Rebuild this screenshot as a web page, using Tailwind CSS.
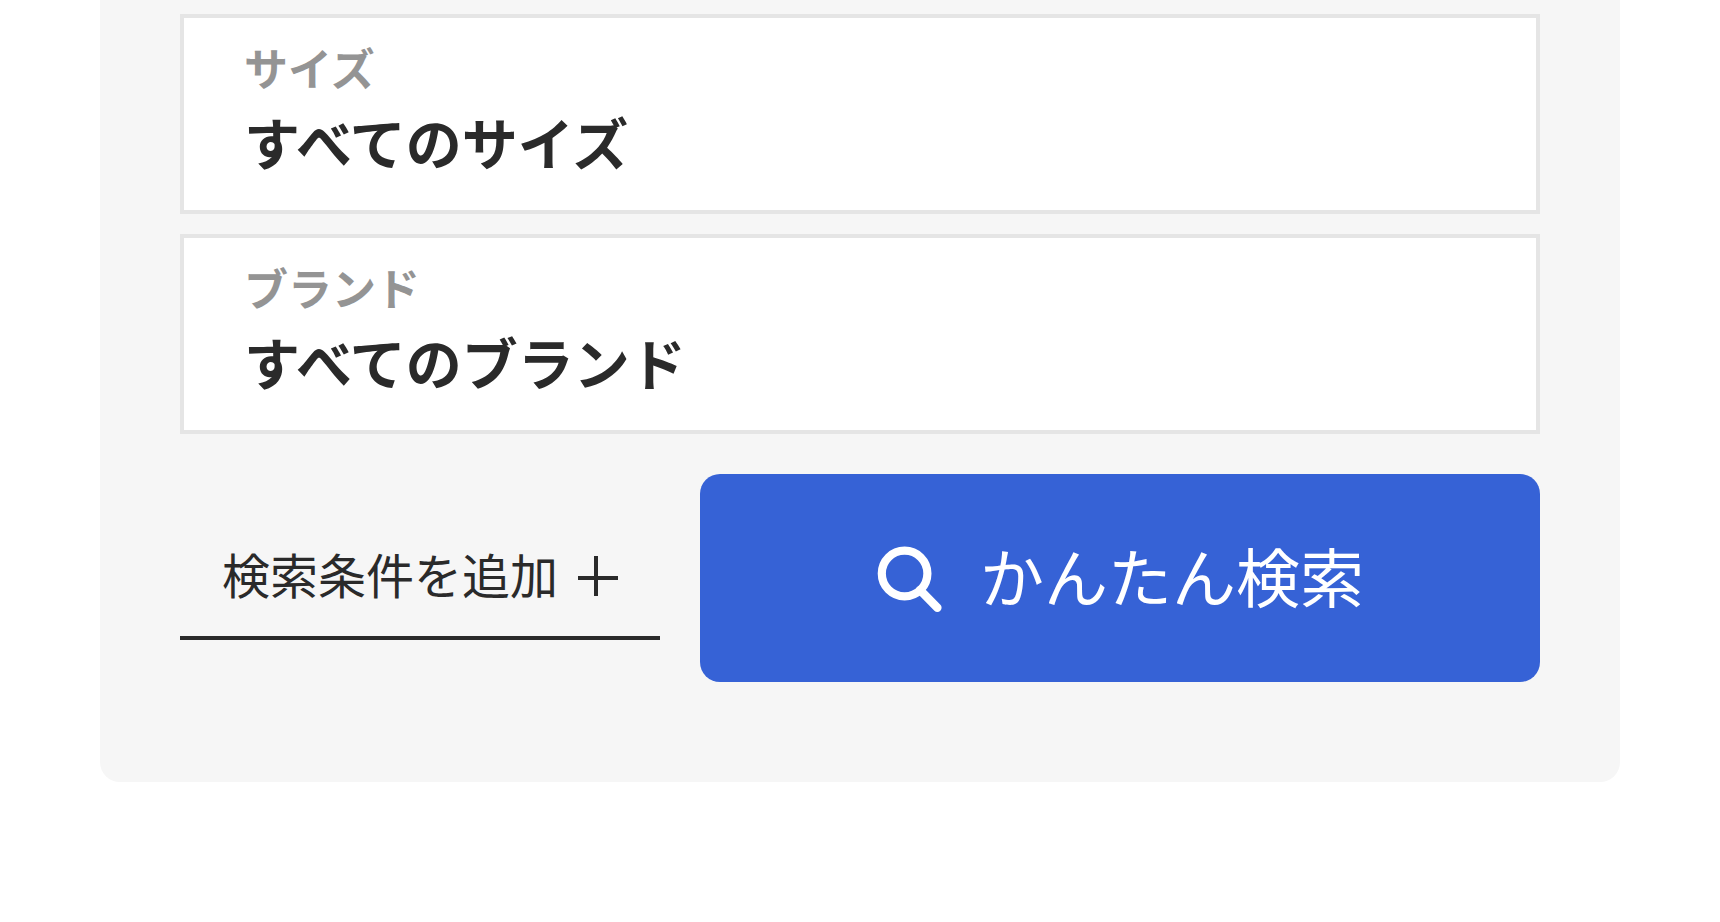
<!DOCTYPE html>
<html lang="ja">
<head>
    <meta charset="UTF-8">
    <meta name="viewport" content="width=device-width, initial-scale=1.0">
    <title>かんたん検索</title>
    <script src="https://cdn.jsdelivr.net/npm/@tailwindcss/browser@4"></script>
</head>
<body class="bg-white font-['Noto_Sans_CJK_JP',sans-serif] text-[#2a2a2a]">
    <main class="mx-[100px]">
        <form class="rounded-b-[20px] bg-[#f6f6f6] px-20 pt-[14px] pb-[100px]">
            <!-- Conditions -->
            <div class="flex flex-col gap-5">
                <div class="flex h-[200px] flex-col border-4 border-[#e5e5e5] bg-white px-[60px] pt-5">
                    <label for="size" class="text-[44px] leading-[58px] font-bold text-[#949494]">サイズ</label>
                    <select id="size" class="w-full appearance-none text-[56px] leading-[90px] font-bold">
                        <option>すべてのサイズ</option>
                    </select>
                </div>
                <div class="flex h-[200px] flex-col border-4 border-[#e5e5e5] bg-white px-[60px] pt-5">
                    <label for="brand" class="text-[44px] leading-[58px] font-bold text-[#949494]">ブランド</label>
                    <select id="brand" class="w-full appearance-none text-[56px] leading-[90px] font-bold">
                        <option>すべてのブランド</option>
                    </select>
                </div>
            </div>

            <!-- Actions -->
            <div class="mt-10 grid grid-cols-[4fr_7fr] items-center gap-10">
                <button type="button" class="flex h-[124px] items-center justify-center gap-5 border-b-4 border-[#2a2a2a] text-[48px] leading-[72px]">
                    <span class="pb-1.5">検索条件を追加</span>
                    <svg class="size-10" viewBox="0 0 40 40" fill="none" stroke="currentColor" stroke-width="4" aria-hidden="true">
                        <path d="M18 0v40M0 22h40"/>
                    </svg>
                </button>
                <button type="submit" class="flex h-[208px] items-center justify-center gap-9 rounded-[20px] bg-[#3662d6] text-[64px] leading-[96px] text-white">
                    <svg class="size-[68px]" viewBox="0 0 68 68" fill="none" stroke="currentColor" aria-hidden="true">
                        <circle cx="28.6" cy="29.5" r="22.8" stroke-width="8.2"/>
                        <path d="M44 46l17.4 17.8" stroke-width="8.4" stroke-linecap="round"/>
                    </svg>
                    <span class="pb-2">かんたん検索</span>
                </button>
            </div>
        </form>
    </main>
</body>
</html>
